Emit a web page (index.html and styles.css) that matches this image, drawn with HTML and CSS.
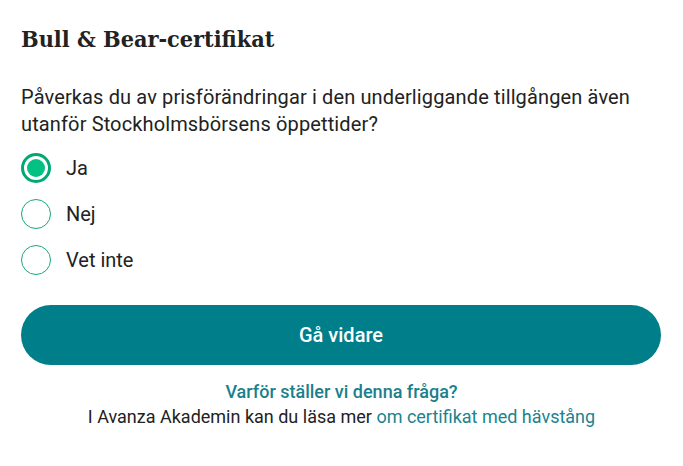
FILE: index.html
```html
<!DOCTYPE html>
<html lang="sv">
<head>
<meta charset="utf-8">
<link rel="stylesheet" href="styles.css">
</head>
<body>
<main class="card">
  <h1 class="title">Bull &amp; Bear-certifikat</h1>
  <p class="question">Påverkas du av prisförändringar i den underliggande tillgången även utanför Stockholmsbörsens öppettider?</p>
  <div class="options">
    <label class="option"><span class="radio checked"></span><span class="label">Ja</span></label>
    <label class="option"><span class="radio"></span><span class="label">Nej</span></label>
    <label class="option"><span class="radio"></span><span class="label">Vet inte</span></label>
  </div>
  <button class="btn">Gå vidare</button>
  <div class="info">
    <a class="why">Varför ställer vi denna fråga?</a>
    <p class="more">I Avanza Akademin kan du läsa mer <a class="link">om certifikat med hävstång</a></p>
  </div>
</main>
</body>
</html>
```
FILE: styles.css
```css
* { box-sizing: border-box; }
html, body { margin: 0; background: #fff; }
body { font-family: Roboto, "Liberation Sans", sans-serif; color: #222; }
.card { padding: 24px 21px 0 21px; width: 683px; }
.title {
  margin: 0;
  font-family: "DejaVu Serif", serif;
  font-weight: bold;
  font-stretch: condensed;
  font-size: 23.2px;
  line-height: 30px;
  color: #222;
}
.question {
  margin: 30px 0 0 0;
  font-size: 20px;
  line-height: 27px;
  letter-spacing: 0.13px;
  color: #222;
}
.options { display: flex; flex-direction: column; gap: 16px; margin-top: 15px; }
.option { display: flex; align-items: center; gap: 15px; height: 30px; }
.radio {
  width: 30px; height: 30px; border-radius: 50%;
  border: 1px solid #1aa57d;
  display: flex; align-items: center; justify-content: center;
  flex: none;
}
.radio.checked { border: 3px solid #02a873; }
.radio.checked::after {
  content: ""; width: 18px; height: 18px; border-radius: 50%; background: #02c182;
}
.label { font-size: 20px; color: #222; }
.btn {
  display: block; width: 640px; height: 60px; margin-top: 30px;
  border: 0; border-radius: 30px; background: #007f8b; color: #fff;
  font-family: Roboto, sans-serif; font-weight: 500; font-size: 20px;
}
.info { text-align: center; margin-top: 14px; font-size: 18px; line-height: 25px; }
.why { display: block; color: #1b7f8c; font-weight: 500; }
.more { margin: 0; color: #222; }
.link { color: #1b8390; }
```
